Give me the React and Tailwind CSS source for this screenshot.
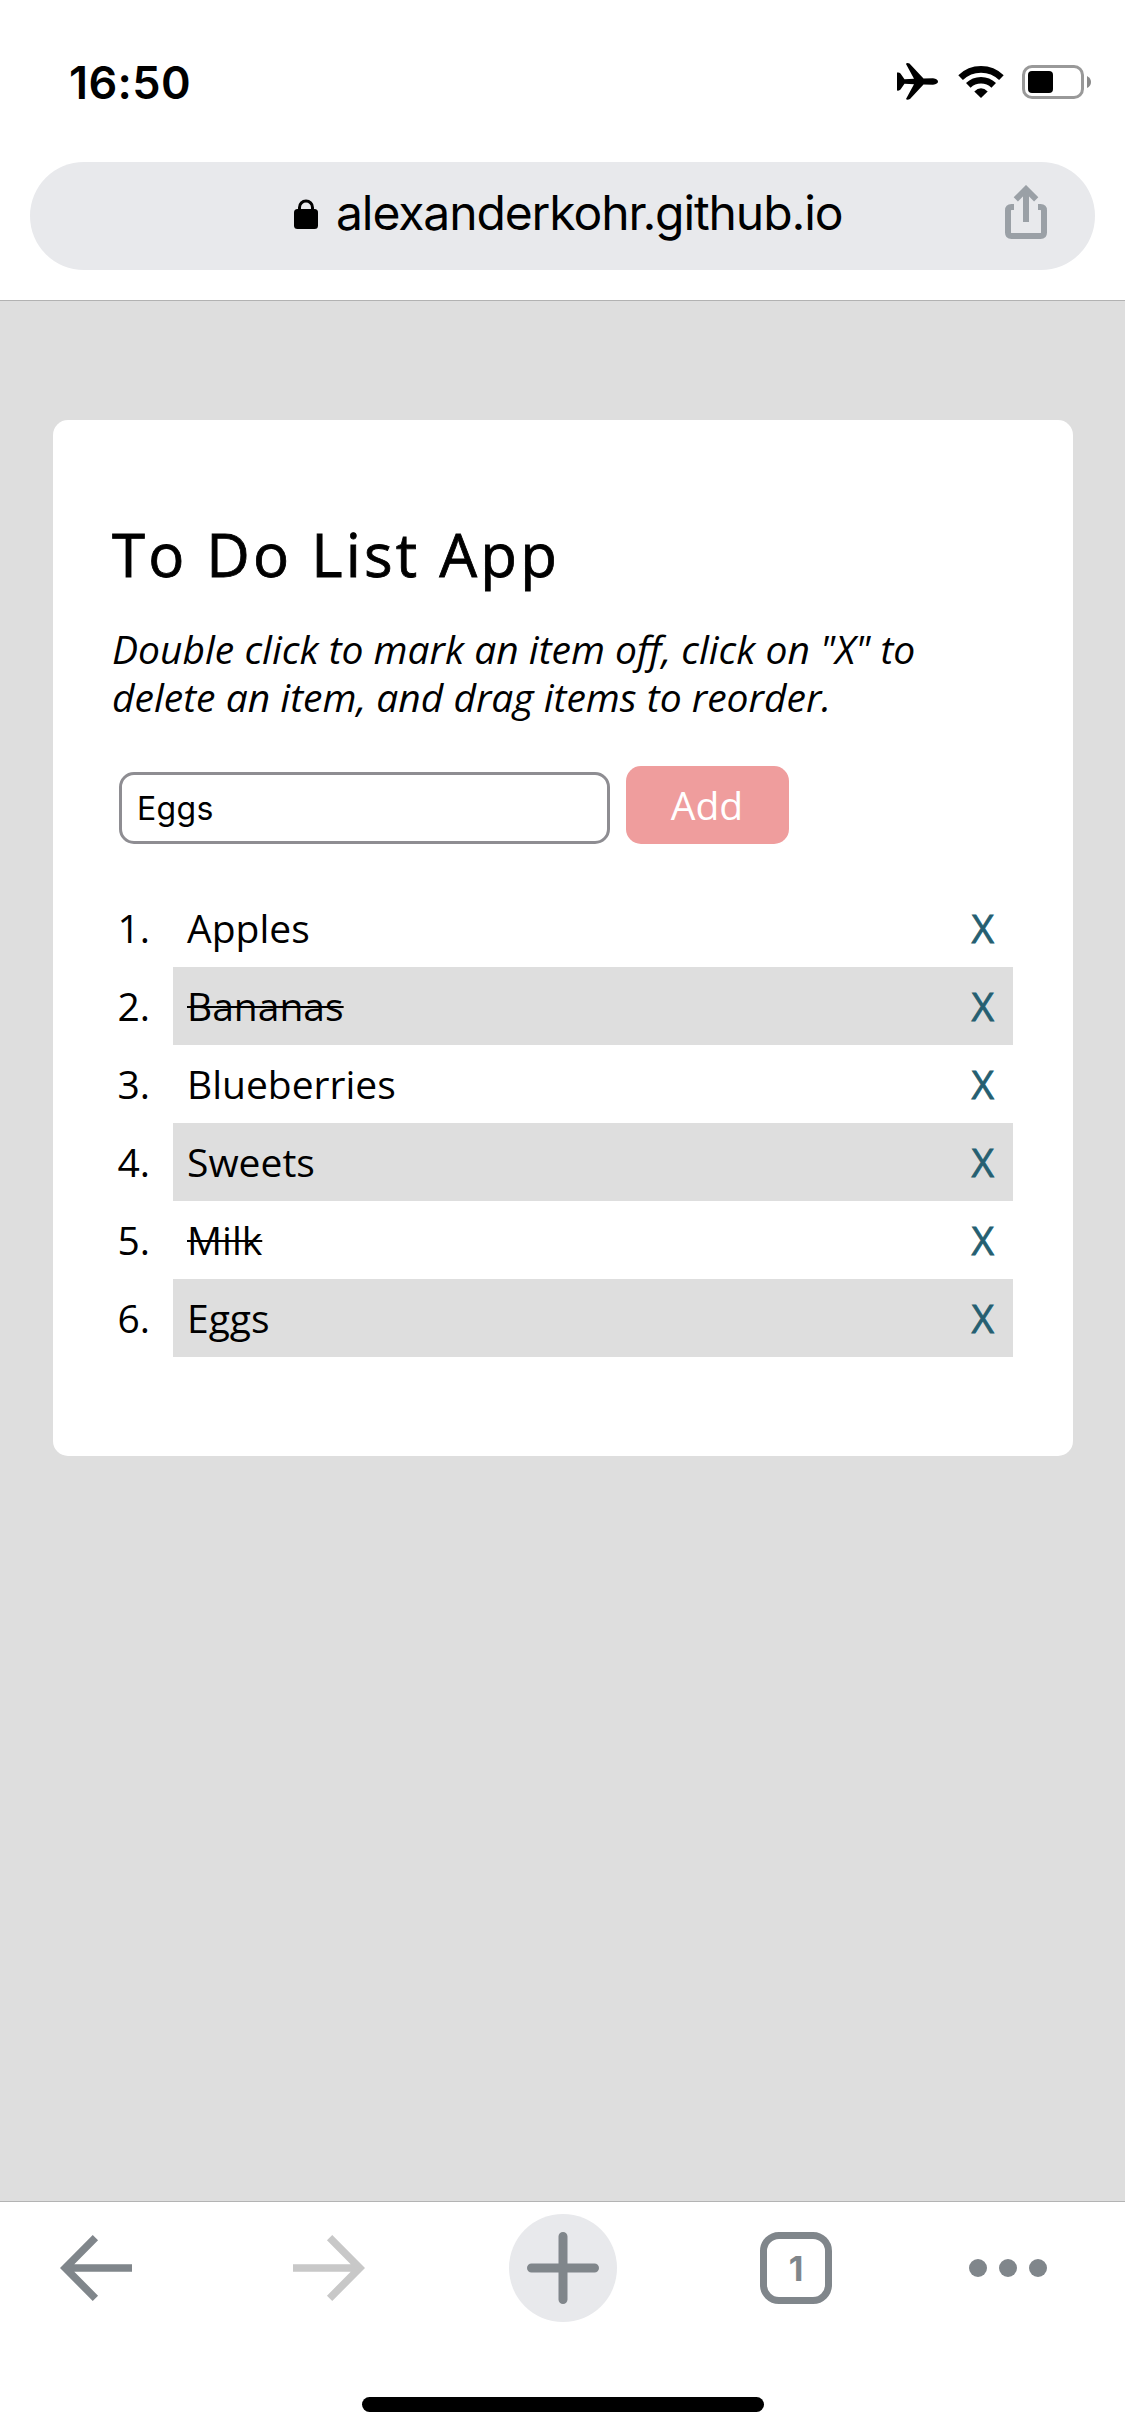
import React from "react";

const items = [
  { name: "Apples" },
  { name: "Bananas", done: true },
  { name: "Blueberries" },
  { name: "Sweets" },
  { name: "Milk", done: true },
  { name: "Eggs" },
];

function Plane() {
  return (
    <svg className="h-[37px] w-[41px]" viewBox="0 0 41 37">
      <path d="M0 9.5Q2.2 9 3.5 10.5L7.5 16.3L17 15.8L9 1Q9.5-.5 12.5.5L26.5 15.5L36 15.2Q41 16 41 18.5Q41 21 36 21.8L26.5 21.5L13 36Q10 37.5 9 36L17 21.2L7.5 20.7L3.5 26.5Q2.2 28 0 27.5Z" />
    </svg>
  );
}

function Wifi() {
  return (
    <svg className="h-[33px] w-[46px]" viewBox="0 0 46 33">
      <path d="M23 33L16.3 26.4Q23 20.2 29.7 26.4Z" strokeLinejoin="round" />
      <g fill="none" stroke="black" strokeWidth="6.6">
        <path d="M2.6 12.6A29.3 29.3 0 0 1 43.4 12.6" />
        <path d="M10.3 20.3A18.3 18.3 0 0 1 35.7 20.3" />
      </g>
    </svg>
  );
}

function Battery() {
  return (
    <div className="flex items-center">
      <div className="h-[34px] w-[62px] rounded-[10px] border-[3px] border-[#999] p-[3px]">
        <div className="h-[22px] w-[25px] rounded-[4px] bg-black" />
      </div>
      <svg className="ml-[3px] h-[12px] w-[4px]" viewBox="0 0 4 12">
        <path d="M0 0Q4 2 4 6Q4 10 0 12Z" fill="#8a8a8a" />
      </svg>
    </div>
  );
}

function Lock() {
  return (
    <svg className="mt-1 h-[30px] w-[24px]" viewBox="0 0 24 30">
      <rect y="10" width="24" height="20" rx="3.5" />
      <path d="M5.5 12V8.5a6.5 6.5 0 0 1 13 0V12" fill="none" stroke="black" strokeWidth="3" />
    </svg>
  );
}

function Share() {
  return (
    <svg className="h-[54px] w-[42px]" viewBox="0 0 42 54" fill="none" stroke="#9aa0a6" strokeWidth="6">
      <path d="M9 22H6.5Q3 22 3 25.5V47.5Q3 51 6.5 51H35.5Q39 51 39 47.5V25.5Q39 22 35.5 22H33" />
      <path d="M21 37V5M10.8 14.4L21 4.2L31.2 14.4" />
    </svg>
  );
}

function Arrow({ className }) {
  return (
    <svg className={className} viewBox="0 0 72 66" fill="none" stroke="currentColor" strokeWidth="7.5">
      <path d="M72 33H6M35.4 2.7L5.2 33L35.4 63.3" />
    </svg>
  );
}

export default function App() {
  return (
    <div className="flex h-[2436px] w-[1125px] flex-col bg-[#dedede] font-['Open_Sans',sans-serif] text-black">
      <header className="h-[301px] shrink-0 border-b border-[#b2b2b2] bg-white font-['Inter',sans-serif]">
        <div className="flex h-[162px] items-start justify-between pl-[69px] pr-[34px] pt-[63px]">
          <div className="text-[45px] font-semibold leading-[39px] tracking-[0.4px]">16:50</div>
          <div className="flex items-center">
            <Plane />
            <div className="ml-5"><Wifi /></div>
            <div className="ml-[18px]"><Battery /></div>
          </div>
        </div>
        <div className="mx-[30px] flex h-[108px] items-center rounded-full bg-[#e8e9ec] pb-2 pl-[264px] pr-12">
          <Lock />
          <div className="ml-[18px] mt-[2px] grow whitespace-nowrap text-[48px] leading-[60px] tracking-[-1.1px]">alexanderkohr.github.io</div>
          <Share />
        </div>
      </header>

      <main className="grow pt-[119px]">
        <section className="ml-[53px] h-[1036px] w-[1020px] rounded-[15px] bg-white px-[60px] pt-[93px]">
          <h1 className="-ml-px text-[60px] leading-[82px] tracking-[3.2px] [-webkit-text-stroke:0.8px_black]">To Do List App</h1>
          <p className="-ml-px mt-[30px] whitespace-nowrap text-[39px] italic leading-[48px]">
            Double click to mark an item off, click on "X" to
            <br />
            delete an item, and drag items to reorder.
          </p>
          <form className="mt-[45px] flex items-end pl-[6px]">
            <div className="flex h-[72px] w-[491px] items-center rounded-[15px] border-[3px] border-[#8e8d92] pl-[15px] pt-[2px] font-['Inter',sans-serif] text-[32px] tracking-[0.3px]">
              Eggs
            </div>
            <button type="button" className="ml-4 h-[78px] w-[163px] rounded-[15px] bg-[#ef9d9d] pr-px text-[39px] leading-[78px] text-white">
              Add
            </button>
          </form>
          <ol className="mt-[45px]">
            {items.map((item, i) => (
              <li key={item.name} className="flex h-[78px] items-center text-[39px] leading-[78px]">
                <span className="w-[37px] text-right">{i + 1}.</span>
                <div className={"ml-[23px] flex w-[840px] justify-between pl-[14px] pr-[19px] " + (i % 2 ? "bg-[#dedede]" : "")}>
                  <span className={item.done ? "line-through decoration-[2px]" : ""}>{item.name}</span>
                  <span className="text-[#255f71] [-webkit-text-stroke:0.8px_#255f71]">X</span>
                </div>
              </li>
            ))}
          </ol>
        </section>
      </main>

      <footer className="flex h-[235px] shrink-0 flex-col items-center border-t border-[#b3b3b3] bg-white">
        <nav className="flex h-[132px] w-full items-center pl-[60px] text-[#80868b]">
          <Arrow className="h-[66px] w-[72px]" />
          <Arrow className="ml-[161px] h-[66px] w-[72px] -scale-x-100 text-[#c8c8c8]" />
          <div className="ml-36 flex size-[108px] items-center justify-center rounded-full bg-[#e8e9ec]">
            <svg className="size-[72px]" viewBox="0 0 72 72" stroke="currentColor" strokeWidth="9" strokeLinecap="round">
              <path d="M4.5 36H67.5M36 4.5V67.5" />
            </svg>
          </div>
          <div className="ml-[143px] flex size-[72px] items-center justify-center rounded-[19px] border-[7px] border-current font-['Inter',sans-serif] text-[34px] font-bold">
            1
          </div>
          <div className="ml-[137px] flex gap-3">
            <span className="size-[18px] rounded-full bg-current" />
            <span className="size-[18px] rounded-full bg-current" />
            <span className="size-[18px] rounded-full bg-current" />
          </div>
        </nav>
        <div className="mt-[63px] h-[15px] w-[402px] rounded-full bg-black" />
      </footer>
    </div>
  );
}
